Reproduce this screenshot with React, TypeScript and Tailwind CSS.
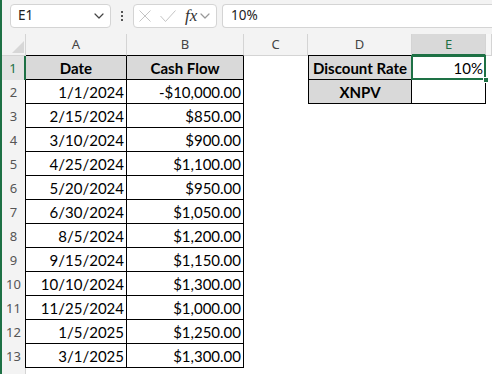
import React from "react";

const cols = [
  { key: "A", w: 101 },
  { key: "B", w: 117 },
  { key: "C", w: 64 },
  { key: "D", w: 104 },
  { key: "E", w: 74 },
  { key: "F", w: 6 },
];

const rows: [string, string][] = [
  ["1/1/2024", "-$10,000.00"],
  ["2/15/2024", "$850.00"],
  ["3/10/2024", "$900.00"],
  ["4/25/2024", "$1,100.00"],
  ["5/20/2024", "$950.00"],
  ["6/30/2024", "$1,050.00"],
  ["8/5/2024", "$1,200.00"],
  ["9/15/2024", "$1,150.00"],
  ["10/10/2024", "$1,300.00"],
  ["11/25/2024", "$1,000.00"],
  ["1/5/2025", "$1,250.00"],
  ["3/1/2025", "$1,300.00"],
];

const Chevron = ({ className = "" }: { className?: string }) => (
  <svg className={className} width="10" height="6" viewBox="0 0 10 6" fill="none">
    <path d="M1 1l4 4 4-4" stroke="currentColor" strokeWidth="1.2" strokeLinecap="round" strokeLinejoin="round" />
  </svg>
);

function FormulaBar() {
  return (
    <div className="flex h-[34px] items-center bg-[#f3f3f3] pl-[8px] pb-[4px] pt-[1px] font-['Noto_Sans',sans-serif]">
      <div className="flex h-[24px] w-[101px] items-center justify-between rounded-[4px] border border-[#d4d4d4] bg-white pl-[7px] pr-[6px] text-[13.5px] text-[#222]">
        <span>E1</span>
        <Chevron className="text-[#444]" />
      </div>
      <div className="flex w-[22px] flex-col items-center gap-[2px]">
        <span className="h-[2px] w-[2px] bg-[#555]" />
        <span className="h-[2px] w-[2px] bg-[#555]" />
        <span className="h-[2px] w-[2px] bg-[#555]" />
      </div>
      <div className="flex h-[24px] w-[84px] items-center rounded-[4px] border border-[#d4d4d4] bg-white pl-[5px]">
        <svg width="12" height="12" viewBox="0 0 12 12" className="text-[#c4c4c4]">
          <path d="M0.5 0.5l11 11M11.5 0.5l-11 11" stroke="currentColor" strokeWidth="1" />
        </svg>
        <svg width="16" height="12" viewBox="0 0 16 12" className="ml-[9px] text-[#c4c4c4]">
          <path d="M0.5 6l5 5.5 10-11" stroke="currentColor" strokeWidth="1" fill="none" />
        </svg>
        <span className="ml-[9px] font-['Liberation_Serif',serif] text-[17px] italic leading-none text-[#333]">fx</span>
        <Chevron className="ml-[3px] text-[#999]" />
      </div>
      <div className="ml-[5px] flex h-[24px] flex-1 items-center rounded-l-[4px] border border-r-0 border-[#d4d4d4] bg-white pl-[8px] text-[13.5px] text-[#222]">
        10%
      </div>
    </div>
  );
}

function ColumnHeader() {
  return (
    <div className="flex h-[22px] font-['Noto_Sans',sans-serif] text-[13px]">
      <div className="relative w-[24px] border-r border-b border-[#d4d4d4] bg-[#f3f3f3]">
        <svg className="absolute left-[10px] top-[7px]" width="12" height="12" viewBox="0 0 12 12">
          <path d="M12 0V12H0Z" fill="#d7d7d7" />
        </svg>
      </div>
      {cols.map((c) => {
        const sel = c.key === "E";
        const table = c.key === "A" || c.key === "B" || c.key === "D";
        return (
          <div
            key={c.key}
            style={{ width: c.w }}
            className={`flex shrink-0 items-center justify-center border-r border-[#d4d4d4] ${
              sel
                ? "border-b-2 border-b-[#1e7145] bg-[#d9d9d9] text-[#1e7145]"
                : table
                ? "border-b border-b-black bg-[#f3f3f3] text-[#444]"
                : c.key === "F"
                ? "border-b border-b-[#d4d4d4] bg-[#f7f7f7]"
                : "border-b border-b-[#d4d4d4] bg-[#f3f3f3] text-[#444]"
            }`}
          >
            {c.key !== "F" && <span className="mt-[1px]">{c.key}</span>}
          </div>
        );
      })}
    </div>
  );
}

function RowHead({ n, label = true }: { n: number; label?: boolean }) {
  const sel = n === 1;
  return (
    <div
      className={`flex w-[24px] shrink-0 items-center justify-center pt-[2px] font-['Noto_Sans',sans-serif] text-[13px] ${
        sel
          ? "border-r-2 border-[#1e7145] bg-[#e3e3e3] text-[#1e7145]"
          : n <= 13
          ? "border-r border-black bg-[#f3f3f3] text-[#555]"
          : "border-r border-[#d4d4d4] bg-[#f3f3f3] text-[#555]"
      }`}
    >
      {label ? n : null}
    </div>
  );
}

const head = "flex shrink-0 items-center justify-center bg-[#d9d9d9] pt-[1px] font-bold text-black";
const val = "flex shrink-0 items-center justify-end pr-[2px] pt-[2px] text-black";

export default function App() {
  return (
    <div className="h-[374px] w-[492px] overflow-hidden border-l-2 border-[#1e7145] bg-white">
      <FormulaBar />
      <ColumnHeader />
      <div className="font-['Lato',sans-serif] text-[15px]">
        <div className="flex h-[24px]">
          <RowHead n={1} />
          <div style={{ width: 101 }} className={`${head} border-r border-b border-black`}>Date</div>
          <div style={{ width: 117 }} className={`${head} border-r border-b border-black`}>Cash Flow</div>
          <div style={{ width: 64 }} className="shrink-0" />
          <div style={{ width: 104 }} className={`${head} border-l border-r border-b border-black`}>Discount Rate</div>
          <div style={{ width: 74 }} className={`${val} relative border-r border-b border-black`}>
            10%
            <div className="pointer-events-none absolute -left-[1px] -top-[1px] -right-[1px] -bottom-[1px] border-2 border-[#1e7145]" />
            <div className="absolute -bottom-[4px] -right-[4px] h-[6px] w-[6px] border border-white bg-[#1e7145]" />
          </div>
        </div>
        {rows.map(([d, v], i) => (
          <div key={i} className="flex h-[24px]">
            <RowHead n={i + 2} />
            <div style={{ width: 101 }} className={`${val} border-r border-b border-black`}>{d}</div>
            <div style={{ width: 117 }} className={`${val} border-r border-b border-black`}>{v}</div>
            {i === 0 && (
              <>
                <div style={{ width: 64 }} className="shrink-0" />
                <div style={{ width: 104 }} className={`${head} border-l border-r border-b border-black`}>XNPV</div>
                <div style={{ width: 74 }} className="shrink-0 border-r border-b border-black" />
              </>
            )}
          </div>
        ))}
        <div className="flex h-[24px]">
          <RowHead n={14} label={false} />
        </div>
      </div>
    </div>
  );
}
